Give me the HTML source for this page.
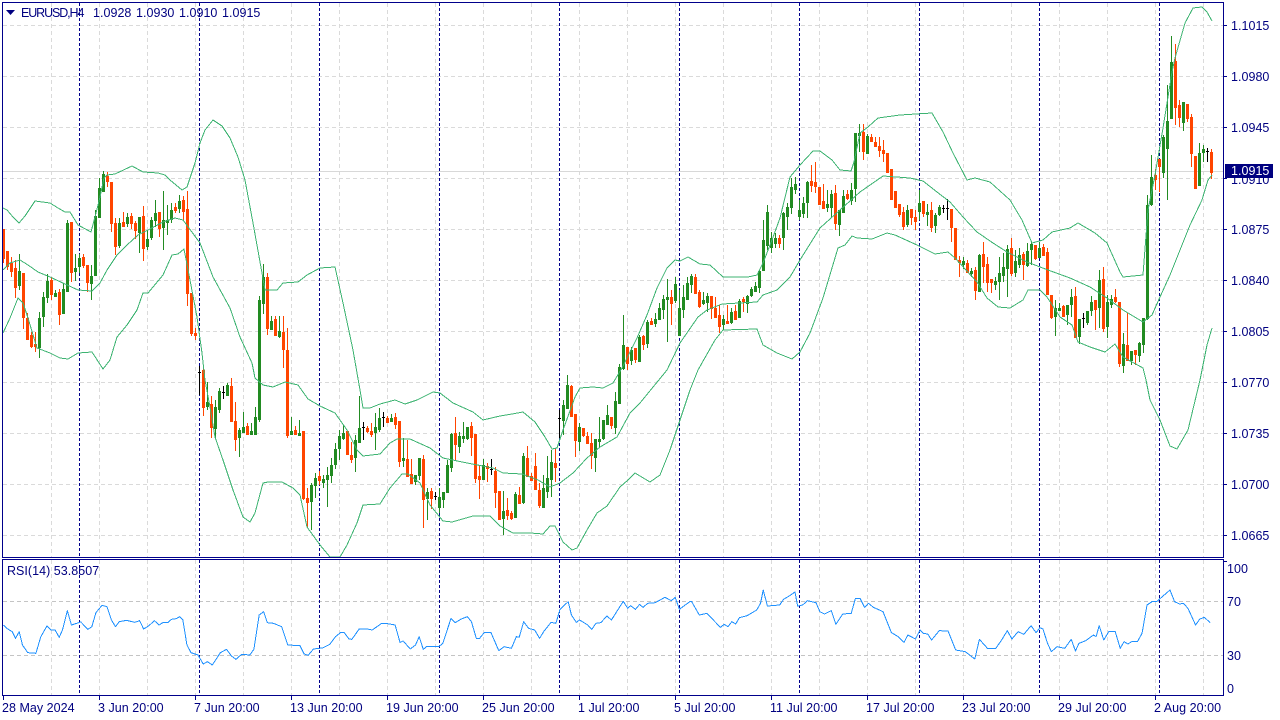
<!DOCTYPE html>
<html><head><meta charset="utf-8"><title>EURUSD,H4</title>
<style>
html,body{margin:0;padding:0;background:#fff;width:1280px;height:720px;overflow:hidden}
svg{position:absolute;left:0;top:0}
.t{position:absolute;margin-top:1px;font:12.5px/14px "Liberation Sans",sans-serif;color:#000080;white-space:pre;letter-spacing:.03px}
</style></head><body>
<svg width="1280" height="720" viewBox="0 0 1280 720" fill="none" shape-rendering="crispEdges">
<g>
<path stroke="#dadada" stroke-dasharray="4 3" d="M3 25.5H1223M3 76.5H1223M3 127.5H1223M3 178.5H1223M3 229.5H1223M3 280.5H1223M3 331.5H1223M3 382.5H1223M3 433.5H1223M3 484.5H1223M3 535.5H1223"/>
<path stroke="#dadada" stroke-dasharray="4 3" d="M51.5 3V557M99.5 3V557M147.5 3V557M195.5 3V557M243.5 3V557M291.5 3V557M339.5 3V557M387.5 3V557M435.5 3V557M483.5 3V557M531.5 3V557M579.5 3V557M627.5 3V557M675.5 3V557M723.5 3V557M771.5 3V557M819.5 3V557M867.5 3V557M915.5 3V557M963.5 3V557M1011.5 3V557M1059.5 3V557M1107.5 3V557M1155.5 3V557M1203.5 3V557"/>
<path stroke="#dadada" stroke-dasharray="4 3" d="M51.5 560V695M99.5 560V695M147.5 560V695M195.5 560V695M243.5 560V695M291.5 560V695M339.5 560V695M387.5 560V695M435.5 560V695M483.5 560V695M531.5 560V695M579.5 560V695M627.5 560V695M675.5 560V695M723.5 560V695M771.5 560V695M819.5 560V695M867.5 560V695M915.5 560V695M963.5 560V695M1011.5 560V695M1059.5 560V695M1107.5 560V695M1155.5 560V695M1203.5 560V695"/>
<path stroke="#c4c4c4" stroke-dasharray="4 3" d="M3 601.5H1223M3 655.5H1223"/>
<path stroke="#d8d8d8" d="M3 171.5H1223"/>
<path stroke="#00008b" stroke-dasharray="3 2" d="M79.5 3V557M199.5 3V557M319.5 3V557M439.5 3V557M559.5 3V557M679.5 3V557M799.5 3V557M919.5 3V557M1039.5 3V557M1159.5 3V557M79.5 560V695M199.5 560V695M319.5 560V695M439.5 560V695M559.5 560V695M679.5 560V695M799.5 560V695M919.5 560V695M1039.5 560V695M1159.5 560V695"/>
</g>
<!-- green candles -->
<path stroke="#228b22" fill="#1f9c1f" d="M19.5 254V290M18.5 271.5h2v14h-2zM39.5 312V358M38.5 318.5h2v29h-2zM43.5 292V327M42.5 297.5h2v19h-2zM47.5 274V303M46.5 281.5h2v16h-2zM55.5 290V297M54.5 293.5h2v3h-2zM63.5 283V313M62.5 289.5h2v24h-2zM67.5 220V291M66.5 223.5h2v68h-2zM75.5 254V281M74.5 268.5h2v3h-2zM79.5 254V273M78.5 258.5h2v8h-2zM91.5 265V300M90.5 276.5h2v7h-2zM95.5 210V275M94.5 216.5h2v59h-2zM99.5 178V217M98.5 188.5h2v29h-2zM103.5 171V192M102.5 174.5h2v17h-2zM119.5 218V248M118.5 223.5h2v22h-2zM127.5 213V227M126.5 217.5h2v6h-2zM139.5 217V253M138.5 217.5h2v15h-2zM147.5 230V250M146.5 239.5h2v7h-2zM151.5 217V240M150.5 220.5h2v17h-2zM155.5 200V227M154.5 213.5h2v7h-2zM163.5 191V250M162.5 220.5h2v7h-2zM167.5 205V235M166.5 220.5h2v2h-2zM171.5 203V223M170.5 210.5h2v9h-2zM179.5 195V213M178.5 201.5h2v7h-2zM207.5 382V410M206.5 402.5h2v4h-2zM215.5 400V438M214.5 407.5h2v21h-2zM219.5 388V413M218.5 391.5h2v18h-2zM227.5 383V396M226.5 385.5h2v10h-2zM239.5 428V457M238.5 430.5h2v7h-2zM243.5 412V432M242.5 427.5h2v5h-2zM251.5 423V435M250.5 431.5h2v3h-2zM255.5 407V434M254.5 417.5h2v17h-2zM259.5 296V422M258.5 300.5h2v119h-2zM263.5 264V314M262.5 277.5h2v26h-2zM271.5 316V329M270.5 321.5h2v8h-2zM279.5 316V338M278.5 331.5h2v5h-2zM291.5 417V434M290.5 431.5h2v3h-2zM299.5 420V435M298.5 433.5h2v2h-2zM311.5 483V530M310.5 485.5h2v16h-2zM315.5 473V498M314.5 478.5h2v7h-2zM323.5 475V488M322.5 479.5h2v3h-2zM327.5 467V507M326.5 475.5h2v4h-2zM331.5 458V483M330.5 465.5h2v10h-2zM335.5 443V469M334.5 449.5h2v15h-2zM339.5 430V460M338.5 436.5h2v12h-2zM343.5 425V440M342.5 433.5h2v5h-2zM355.5 435V472M354.5 440.5h2v17h-2zM359.5 396V442M358.5 428.5h2v14h-2zM375.5 413V450M374.5 427.5h2v5h-2zM379.5 408V432M378.5 418.5h2v11h-2zM391.5 414V422M390.5 418.5h2v3h-2zM403.5 438V467M402.5 458.5h2v2h-2zM415.5 475V485M414.5 475.5h2v6h-2zM419.5 458V480M418.5 458.5h2v17h-2zM427.5 488V520M426.5 492.5h2v6h-2zM439.5 488V513M438.5 497.5h2v10h-2zM443.5 492V508M442.5 492.5h2v7h-2zM447.5 460V492M446.5 465.5h2v27h-2zM451.5 433V472M450.5 434.5h2v33h-2zM459.5 432V453M458.5 436.5h2v10h-2zM463.5 422V443M462.5 436.5h2v2h-2zM467.5 427V440M466.5 427.5h2v11h-2zM483.5 459V480M482.5 465.5h2v14h-2zM503.5 491V535M502.5 511.5h2v7h-2zM515.5 492V517M514.5 494.5h2v23h-2zM523.5 453V504M522.5 456.5h2v46h-2zM543.5 475V507M542.5 488.5h2v19h-2zM547.5 456V498M546.5 478.5h2v13h-2zM551.5 450V497M550.5 462.5h2v17h-2zM563.5 400V435M562.5 405.5h2v15h-2zM567.5 375V408M566.5 385.5h2v23h-2zM579.5 423V451M578.5 427.5h2v14h-2zM595.5 439V472M594.5 439.5h2v18h-2zM599.5 417V447M598.5 439.5h2v2h-2zM603.5 420V440M602.5 420.5h2v18h-2zM607.5 405V424M606.5 415.5h2v9h-2zM615.5 392V434M614.5 401.5h2v26h-2zM619.5 364V403M618.5 367.5h2v36h-2zM623.5 315V370M622.5 345.5h2v23h-2zM631.5 347V365M630.5 350.5h2v10h-2zM639.5 335V362M638.5 337.5h2v24h-2zM647.5 320V348M646.5 322.5h2v21h-2zM655.5 313V327M654.5 319.5h2v4h-2zM659.5 303V320M658.5 308.5h2v11h-2zM663.5 295V319M662.5 299.5h2v10h-2zM667.5 279V342M666.5 297.5h2v2h-2zM675.5 277V303M674.5 284.5h2v16h-2zM679.5 290V335M678.5 308.5h2v27h-2zM683.5 285V318M682.5 297.5h2v12h-2zM687.5 277V300M686.5 283.5h2v16h-2zM691.5 274V293M690.5 276.5h2v8h-2zM703.5 292V305M702.5 300.5h2v3h-2zM707.5 293V312M706.5 296.5h2v6h-2zM723.5 315V330M722.5 319.5h2v5h-2zM731.5 308V324M730.5 312.5h2v10h-2zM739.5 299V317M738.5 301.5h2v16h-2zM747.5 295V313M746.5 296.5h2v7h-2zM751.5 287V297M750.5 289.5h2v6h-2zM755.5 282V292M754.5 286.5h2v5h-2zM759.5 270V293M758.5 271.5h2v16h-2zM763.5 220V270M762.5 240.5h2v30h-2zM767.5 205V250M766.5 212.5h2v33h-2zM771.5 232V253M770.5 238.5h2v9h-2zM775.5 233V248M774.5 238.5h2v5h-2zM783.5 212V250M782.5 213.5h2v24h-2zM787.5 203V230M786.5 207.5h2v9h-2zM791.5 178V214M790.5 187.5h2v20h-2zM795.5 177V194M794.5 184.5h2v5h-2zM799.5 200V220M798.5 210.5h2v6h-2zM803.5 197V218M802.5 203.5h2v10h-2zM807.5 181V218M806.5 182.5h2v20h-2zM827.5 190V212M826.5 204.5h2v3h-2zM831.5 190V217M830.5 194.5h2v13h-2zM839.5 210V236M838.5 210.5h2v14h-2zM843.5 190V213M842.5 196.5h2v16h-2zM851.5 183V205M850.5 190.5h2v10h-2zM855.5 133V202M854.5 133.5h2v55h-2zM859.5 124V152M858.5 133.5h2v2h-2zM867.5 134V153M866.5 136.5h2v17h-2zM907.5 205V227M906.5 210.5h2v14h-2zM919.5 190V220M918.5 203.5h2v8h-2zM927.5 204V226M926.5 212.5h2v2h-2zM935.5 213V233M934.5 215.5h2v10h-2zM939.5 205V216M938.5 207.5h2v7h-2zM963.5 257V269M962.5 261.5h2v3h-2zM971.5 268V277M970.5 271.5h2v2h-2zM979.5 254V292M978.5 255.5h2v36h-2zM995.5 277V290M994.5 281.5h2v3h-2zM999.5 257V300M998.5 273.5h2v8h-2zM1003.5 253V282M1002.5 267.5h2v8h-2zM1007.5 245V297M1006.5 249.5h2v19h-2zM1015.5 250V277M1014.5 261.5h2v11h-2zM1019.5 248V268M1018.5 255.5h2v9h-2zM1027.5 243V267M1026.5 251.5h2v14h-2zM1031.5 242V265M1030.5 244.5h2v5h-2zM1039.5 242V258M1038.5 248.5h2v9h-2zM1055.5 300V336M1054.5 308.5h2v8h-2zM1059.5 303V311M1058.5 308.5h2v2h-2zM1067.5 305V325M1066.5 305.5h2v9h-2zM1071.5 289V317M1070.5 297.5h2v7h-2zM1079.5 319V344M1078.5 319.5h2v17h-2zM1087.5 311V325M1086.5 311.5h2v11h-2zM1091.5 296V316M1090.5 302.5h2v8h-2zM1099.5 270V328M1098.5 280.5h2v27h-2zM1107.5 295V338M1106.5 302.5h2v24h-2zM1111.5 295V308M1110.5 299.5h2v5h-2zM1123.5 333V373M1122.5 344.5h2v21h-2zM1131.5 351V365M1130.5 351.5h2v9h-2zM1139.5 342V362M1138.5 343.5h2v12h-2zM1143.5 318V353M1142.5 318.5h2v26h-2zM1147.5 195V320M1146.5 205.5h2v113h-2zM1151.5 155V206M1150.5 177.5h2v27h-2zM1163.5 135V178M1162.5 137.5h2v35h-2zM1167.5 85V200M1166.5 121.5h2v27h-2zM1171.5 36V118M1170.5 62.5h2v56h-2zM1183.5 102V131M1182.5 102.5h2v20h-2zM1199.5 143V185M1198.5 153.5h2v32h-2zM1203.5 145V162M1202.5 149.5h2v3h-2z"/>
<!-- orange candles -->
<path stroke="#ff4500" fill="#ff6a00" d="M3.5 229V263M2.5 229.5h2v29h-2zM7.5 251V270M6.5 251.5h2v15h-2zM11.5 257V277M10.5 263.5h2v8h-2zM15.5 260V298M14.5 268.5h2v19h-2zM23.5 273V329M22.5 273.5h2v44h-2zM27.5 313V339M26.5 318.5h2v21h-2zM31.5 332V348M30.5 335.5h2v11h-2zM35.5 332V352M34.5 344.5h2v2h-2zM51.5 277V300M50.5 280.5h2v14h-2zM59.5 289V325M58.5 292.5h2v22h-2zM71.5 222V282M70.5 222.5h2v50h-2zM83.5 254V268M82.5 257.5h2v8h-2zM87.5 265V292M86.5 265.5h2v17h-2zM107.5 172V187M106.5 176.5h2v5h-2zM111.5 182V232M110.5 182.5h2v41h-2zM115.5 218V255M114.5 223.5h2v23h-2zM123.5 212V227M122.5 222.5h2v4h-2zM131.5 213V229M130.5 216.5h2v7h-2zM135.5 221V239M134.5 223.5h2v7h-2zM143.5 206V261M142.5 216.5h2v32h-2zM159.5 212V237M158.5 212.5h2v16h-2zM175.5 203V213M174.5 207.5h2v3h-2zM183.5 196V220M182.5 200.5h2v11h-2zM187.5 191V306M186.5 209.5h2v84h-2zM191.5 293V336M190.5 293.5h2v40h-2zM195.5 328V340M194.5 333.5h2v2h-2zM203.5 366V416M202.5 370.5h2v37h-2zM211.5 396V438M210.5 404.5h2v23h-2zM231.5 378V422M230.5 386.5h2v35h-2zM235.5 402V451M234.5 421.5h2v18h-2zM247.5 423V435M246.5 426.5h2v8h-2zM267.5 273V335M266.5 277.5h2v51h-2zM275.5 316V336M274.5 319.5h2v16h-2zM283.5 316V368M282.5 332.5h2v17h-2zM287.5 328V438M286.5 350.5h2v85h-2zM295.5 426V435M294.5 430.5h2v4h-2zM303.5 431V500M302.5 431.5h2v67h-2zM307.5 488V527M306.5 498.5h2v4h-2zM319.5 471V485M318.5 476.5h2v4h-2zM347.5 431V455M346.5 431.5h2v23h-2zM351.5 442V463M350.5 455.5h2v4h-2zM367.5 426V433M366.5 428.5h2v3h-2zM371.5 423V437M370.5 431.5h2v3h-2zM387.5 416V423M386.5 418.5h2v4h-2zM395.5 413V429M394.5 417.5h2v7h-2zM399.5 421V467M398.5 421.5h2v40h-2zM407.5 440V477M406.5 459.5h2v17h-2zM411.5 459V483M410.5 474.5h2v9h-2zM423.5 455V528M422.5 459.5h2v40h-2zM431.5 488V509M430.5 491.5h2v7h-2zM455.5 417V460M454.5 433.5h2v11h-2zM471.5 422V456M470.5 426.5h2v11h-2zM475.5 434V483M474.5 434.5h2v44h-2zM479.5 466V499M478.5 476.5h2v3h-2zM487.5 463V482M486.5 466.5h2v2h-2zM495.5 467V508M494.5 471.5h2v21h-2zM499.5 491V520M498.5 491.5h2v28h-2zM507.5 498V520M506.5 510.5h2v5h-2zM511.5 511V520M510.5 513.5h2v5h-2zM519.5 487V504M518.5 495.5h2v8h-2zM527.5 446V477M526.5 458.5h2v18h-2zM531.5 473V480M530.5 476.5h2v4h-2zM535.5 453V489M534.5 466.5h2v23h-2zM539.5 483V508M538.5 490.5h2v15h-2zM555.5 449V482M554.5 463.5h2v4h-2zM571.5 385V417M570.5 386.5h2v30h-2zM575.5 414V457M574.5 414.5h2v26h-2zM583.5 428V437M582.5 428.5h2v7h-2zM587.5 432V444M586.5 436.5h2v7h-2zM591.5 433V469M590.5 443.5h2v12h-2zM611.5 417V429M610.5 417.5h2v8h-2zM627.5 347V370M626.5 347.5h2v16h-2zM635.5 348V363M634.5 348.5h2v11h-2zM643.5 335V350M642.5 336.5h2v8h-2zM651.5 318V325M650.5 321.5h2v3h-2zM671.5 290V325M670.5 297.5h2v6h-2zM695.5 274V294M694.5 277.5h2v16h-2zM699.5 290V308M698.5 292.5h2v14h-2zM711.5 296V319M710.5 296.5h2v12h-2zM715.5 297V317M714.5 308.5h2v9h-2zM719.5 305V333M718.5 315.5h2v11h-2zM727.5 305V323M726.5 321.5h2v2h-2zM735.5 305V319M734.5 311.5h2v8h-2zM743.5 297V312M742.5 299.5h2v2h-2zM779.5 235V248M778.5 238.5h2v5h-2zM811.5 165V192M810.5 181.5h2v4h-2zM815.5 162V193M814.5 182.5h2v4h-2zM819.5 187V205M818.5 187.5h2v17h-2zM823.5 184V208M822.5 201.5h2v7h-2zM835.5 185V230M834.5 193.5h2v30h-2zM847.5 190V200M846.5 194.5h2v4h-2zM863.5 124V160M862.5 132.5h2v19h-2zM871.5 134V142M870.5 137.5h2v4h-2zM875.5 137V146M874.5 142.5h2v4h-2zM879.5 137V157M878.5 146.5h2v4h-2zM883.5 140V162M882.5 150.5h2v3h-2zM887.5 153V173M886.5 153.5h2v19h-2zM891.5 169V200M890.5 169.5h2v30h-2zM895.5 191V208M894.5 191.5h2v16h-2zM899.5 204V217M898.5 204.5h2v10h-2zM903.5 207V230M902.5 212.5h2v14h-2zM911.5 209V225M910.5 209.5h2v8h-2zM915.5 210V230M914.5 217.5h2v4h-2zM923.5 201V217M922.5 201.5h2v12h-2zM931.5 202V232M930.5 210.5h2v17h-2zM951.5 209V242M950.5 209.5h2v18h-2zM955.5 228V260M954.5 228.5h2v31h-2zM959.5 256V277M958.5 260.5h2v2h-2zM967.5 260V273M966.5 263.5h2v9h-2zM975.5 267V300M974.5 270.5h2v20h-2zM983.5 242V283M982.5 254.5h2v12h-2zM987.5 257V292M986.5 264.5h2v18h-2zM991.5 279V293M990.5 279.5h2v3h-2zM1011.5 238V276M1010.5 248.5h2v25h-2zM1023.5 252V280M1022.5 254.5h2v10h-2zM1035.5 245V260M1034.5 245.5h2v13h-2zM1043.5 244V256M1042.5 247.5h2v8h-2zM1047.5 248V295M1046.5 252.5h2v42h-2zM1051.5 295V319M1050.5 295.5h2v22h-2zM1063.5 305V317M1062.5 306.5h2v10h-2zM1075.5 287V338M1074.5 296.5h2v41h-2zM1095.5 300V330M1094.5 300.5h2v9h-2zM1103.5 267V332M1102.5 279.5h2v49h-2zM1115.5 289V303M1114.5 297.5h2v4h-2zM1119.5 302V367M1118.5 302.5h2v61h-2zM1127.5 313V361M1126.5 345.5h2v15h-2zM1135.5 350V365M1134.5 350.5h2v4h-2zM1155.5 169V190M1154.5 175.5h2v4h-2zM1159.5 159V192M1158.5 159.5h2v7h-2zM1175.5 44V125M1174.5 61.5h2v46h-2zM1179.5 100V127M1178.5 105.5h2v12h-2zM1187.5 104V122M1186.5 104.5h2v14h-2zM1191.5 114V167M1190.5 117.5h2v36h-2zM1195.5 156V189M1194.5 156.5h2v32h-2zM1211.5 149V179M1210.5 152.5h2v20h-2z"/>
<!-- doji -->
<path stroke="#000" d="M199.5 366V395M198 372.5h3M223.5 386V399M222 392.5h3M363.5 422V440M362 427.5h3M383.5 412V427M382 417.5h3M435.5 492V500M434 496.5h3M491.5 459V475M490 469.5h3M559.5 410V438M558 418.5h3M943.5 205V213M942 208.5h3M947.5 199V220M946 208.5h3M1083.5 313V328M1082 318.5h3M1207.5 148V162M1206 151.5h3"/>
<!-- Bollinger bands -->
<g stroke="#3cb371" stroke-linejoin="round">
<path d="M3 208L7 210L13 217L19 223L25 216L35 201L50 203L58 208L65 212L70 212L78 225L91 232L95 217L100 197L104 178L107 175L115 174L132 166L143 172L158 173L165 175L170 180L182 190L187 187L190 178L195 163L200 143L205 130L213 120L222 126L230 138L238 157L245 180L253 223L262 273L265 290L277 290L283 283L298 282L307 275L320 268L335 267L343 303L353 350L360 390L363 408L370 408L380 404L395 400L405 404L417 400L433 392L440 393L453 403L473 412L483 420L500 416L512 414L523 412L535 422L545 437L552 449L557 448L563 430L575 397L580 388L593 387L603 388L613 383L622 368L637 338L647 315L657 288L667 268L675 260L680 261L688 257L700 264L710 265L723 277L748 277L757 275L763 263L772 240L780 218L790 177L800 165L813 151L820 151L832 160L840 170L851 171L854 162L860 133L868 127L878 118L900 115L932 113L943 132L953 153L967 180L975 178L990 182L1010 200L1022 220L1032 243L1043 240L1052 232L1070 228L1078 223L1095 233L1107 243L1120 272L1123 277L1143 275L1148 210L1155 175L1163 128L1172 72L1175 58L1185 23L1193 8L1202 7L1207 12L1212 21"/>
<path d="M3 270L10 263L20 260L28 265L38 272L50 277L65 284L78 290L92 291L100 283L107 270L117 255L127 245L138 235L148 230L163 222L175 218L183 220L200 243L213 277L230 308L240 337L252 363L255 378L263 385L273 387L285 382L298 385L308 399L320 406L335 413L347 430L357 450L363 456L380 454L390 443L397 439L410 439L430 448L443 458L467 463L493 468L503 473L522 474L538 480L550 487L560 483L573 473L587 458L600 447L617 437L630 413L640 403L667 370L680 343L698 317L707 310L722 304L757 302L763 295L777 290L790 277L800 260L820 228L840 210L860 192L883 176L910 178L923 181L937 192L950 202L963 217L977 232L993 243L1007 252L1027 262L1048 270L1070 278L1090 287L1107 298L1123 310L1143 322L1152 315L1160 297L1170 275L1180 250L1190 225L1202 200L1208 180L1212 175"/>
<path d="M3 333L10 318L18 298L23 303L28 318L37 348L50 353L60 358L68 359L78 353L92 352L103 369L110 360L117 337L127 325L137 310L143 293L148 293L163 275L172 255L178 254L184 249L190 280L197 317L202 353L205 380L210 407L215 437L223 460L233 490L243 517L250 522L255 513L263 483L268 482L282 482L293 488L300 495L307 527L320 545L330 557L340 557L347 545L357 523L363 505L380 504L390 488L402 474L408 474L420 483L430 505L443 521L452 522L473 516L490 516L500 526L513 533L530 533L543 534L550 526L555 526L563 542L572 550L577 548L587 530L597 513L607 506L620 487L628 480L635 473L640 476L650 482L660 475L670 450L680 420L690 390L698 370L715 340L723 330L757 329L763 345L777 353L792 359L800 352L810 333L823 298L838 248L845 245L852 236L857 238L872 239L887 233L895 235L917 245L935 254L948 252L955 258L977 282L987 298L998 307L1010 308L1023 300L1028 290L1040 290L1047 297L1060 317L1072 325L1078 342L1090 347L1105 352L1115 344L1123 357L1143 368L1146 380L1150 400L1160 420L1170 446L1177 449L1188 430L1200 380L1207 345L1212 328"/>
</g>
<!-- RSI -->
<g stroke="#1e90ff" stroke-linejoin="round">
<path vector-effect="non-scaling-stroke" transform="translate(0 580) scale(.40816 .33333)" d="M8 135L20 148L30 155L38 175L47 155L55 195L68 218L88 220L100 170L115 138L125 150L135 150L145 172L153 150L165 92L175 135L198 126L215 148L225 140L235 98L250 76L262 80L273 120L283 140L292 125L310 121L330 127L342 122L352 147L365 137L378 122L390 135L400 127L412 127L420 118L432 116L440 110L448 120L458 195L468 218L485 225L498 252L508 245L520 255L540 218L555 208L567 228L578 238L592 223L612 225L622 208L635 105L646 95L655 128L670 130L690 140L705 195L735 197L745 222L755 226L768 207L790 204L808 193L822 170L835 157L843 157L855 177L862 178L880 147L900 147L912 150L935 130L945 130L968 135L980 187L988 183L1005 207L1018 195L1027 170L1037 208L1045 200L1060 200L1075 200L1085 190L1105 115L1115 128L1130 117L1145 110L1155 125L1167 175L1175 175L1187 157L1203 158L1222 212L1235 200L1253 205L1265 170L1272 172L1283 125L1295 145L1310 150L1322 175L1332 155L1350 127L1362 130L1372 88L1392 65L1400 105L1412 127L1420 120L1440 135L1450 148L1460 130L1472 128L1487 108L1498 120L1527 64L1538 85L1545 77L1557 88L1568 72"/>
<path vector-effect="non-scaling-stroke" transform="translate(640 580) scale(.38265 .33333)" d="M0 75L8 82L20 70L40 68L65 52L82 62L92 52L103 88L130 65L135 65L155 105L175 100L210 142L220 133L230 140L240 125L250 132L260 113L280 107L305 90L315 70L322 30L333 78L365 75L375 58L390 48L405 36L412 78L425 75L438 62L460 68L470 95L482 102L500 92L512 133L530 102L552 100L563 55L575 55L587 82L597 70L610 82L635 95L657 158L675 170L690 187L700 165L720 177L732 150L740 160L752 162L762 180L782 152L805 153L825 210L850 215L875 237L887 178L908 205L930 205L945 180L960 152L972 177L988 155L1003 163L1022 137L1035 158L1045 143L1053 147L1065 190L1075 215L1090 200L1110 205L1127 178L1138 213L1147 190L1165 182L1185 165L1192 170L1200 137L1212 180L1225 155L1242 155L1255 205L1265 185L1275 192L1285 185L1300 185L1312 160L1325 75L1338 65L1350 65L1385 30L1397 65L1410 72L1420 70L1432 85L1452 135L1463 117L1475 112L1490 128"/>
</g>
<!-- frames and ticks -->
<path stroke="#00008b" d="M2.5 2.5H1223.5V557.5H2.5ZM2.5 559.5H1223.5V695.5H2.5ZM1223 25.5h4M1223 76.5h4M1223 127.5h4M1223 178.5h4M1223 229.5h4M1223 280.5h4M1223 331.5h4M1223 382.5h4M1223 433.5h4M1223 484.5h4M1223 535.5h4M1223 561.5h4M3.5 696v4M99.5 696v4M195.5 696v4M291.5 696v4M387.5 696v4M483.5 696v4M579.5 696v4M675.5 696v4M771.5 696v4M867.5 696v4M963.5 696v4M1059.5 696v4M1155.5 696v4"/>
<path fill="#000080" shape-rendering="auto" d="M6 10H15L10.5 15Z"/>
</svg>
<span class="t" style="left:21px;top:5px;letter-spacing:-1.1px">EURUSD,H4</span>
<span class="t" style="left:93px;top:5px">1.0928</span>
<span class="t" style="left:136px;top:5px">1.0930</span>
<span class="t" style="left:179px;top:5px">1.0910</span>
<span class="t" style="left:222px;top:5px">1.0915</span>
<span class="t" style="left:7px;top:563px">RSI(14) 53.8507</span>
<span class="t" style="left:1231px;top:18px">1.1015</span>
<span class="t" style="left:1231px;top:69px">1.0980</span>
<span class="t" style="left:1231px;top:120px">1.0945</span>
<span class="t" style="left:1231px;top:172px">1.0910</span>
<span class="t" style="left:1231px;top:222px">1.0875</span>
<span class="t" style="left:1231px;top:273px">1.0840</span>
<span class="t" style="left:1231px;top:324px">1.0805</span>
<span class="t" style="left:1231px;top:375px">1.0770</span>
<span class="t" style="left:1231px;top:426px">1.0735</span>
<span class="t" style="left:1231px;top:477px">1.0700</span>
<span class="t" style="left:1231px;top:528px">1.0665</span>
<div style="position:absolute;left:1225px;top:164px;width:48px;height:14px;background:#000080"></div>
<span class="t" style="left:1231px;top:164px;margin-top:0;color:#fff">1.0915</span>
<span class="t" style="left:1227px;top:561px">100</span>
<span class="t" style="left:1227px;top:594px">70</span>
<span class="t" style="left:1227px;top:648px">30</span>
<span class="t" style="left:1227px;top:681px">0</span>
<span class="t" style="left:2px;top:700px">28 May 2024</span>
<span class="t" style="left:98px;top:700px">3 Jun 20:00</span>
<span class="t" style="left:194px;top:700px">7 Jun 20:00</span>
<span class="t" style="left:290px;top:700px">13 Jun 20:00</span>
<span class="t" style="left:386px;top:700px">19 Jun 20:00</span>
<span class="t" style="left:482px;top:700px">25 Jun 20:00</span>
<span class="t" style="left:578px;top:700px">1 Jul 20:00</span>
<span class="t" style="left:674px;top:700px">5 Jul 20:00</span>
<span class="t" style="left:770px;top:700px">11 Jul 20:00</span>
<span class="t" style="left:866px;top:700px">17 Jul 20:00</span>
<span class="t" style="left:962px;top:700px">23 Jul 20:00</span>
<span class="t" style="left:1058px;top:700px">29 Jul 20:00</span>
<span class="t" style="left:1154px;top:700px">2 Aug 20:00</span>
</body></html>
